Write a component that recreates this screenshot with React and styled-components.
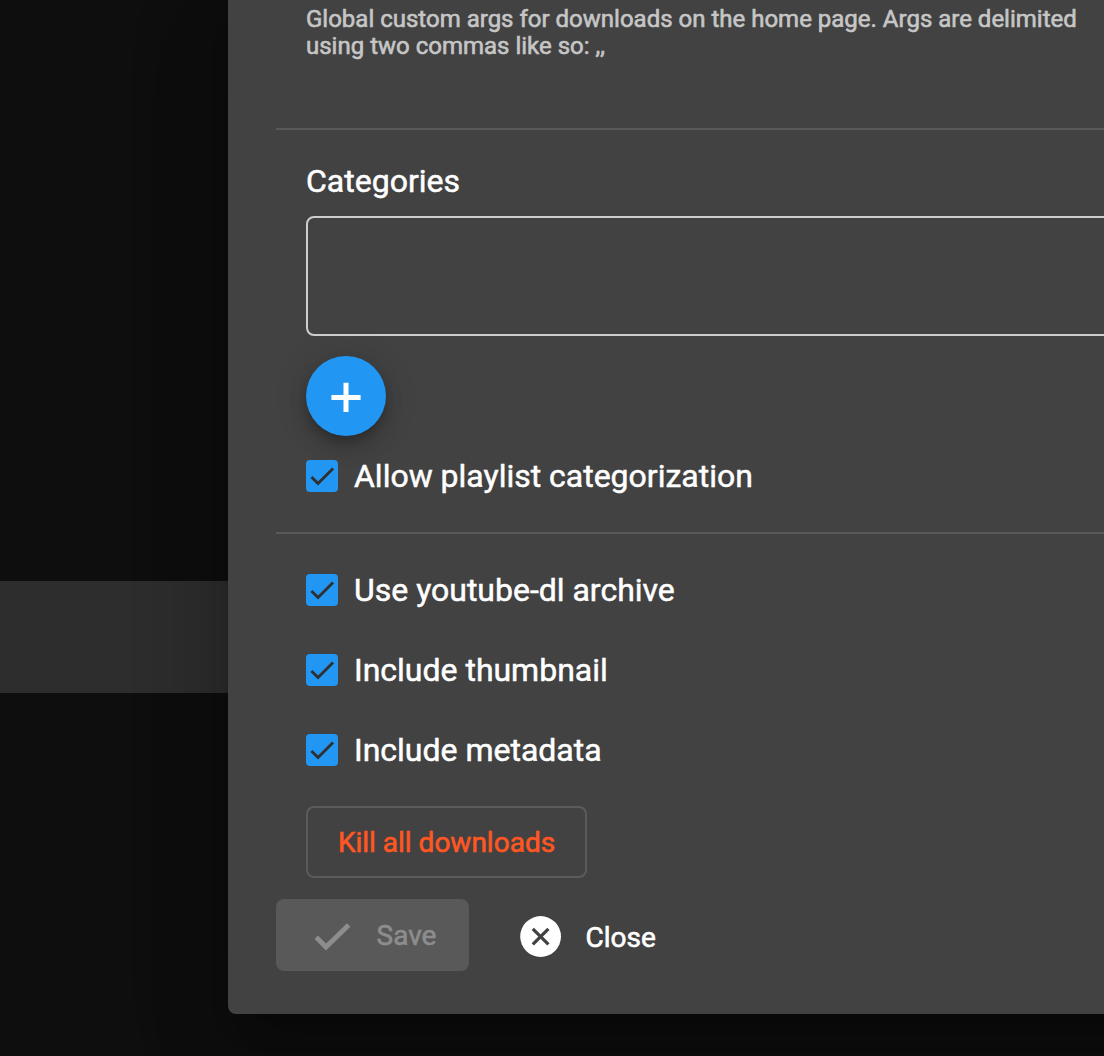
import React from "react";
import styled, { createGlobalStyle } from "styled-components";

const GlobalStyle = createGlobalStyle`
  *, *::before, *::after { box-sizing: border-box; }
  html, body { margin: 0; background: #0e0e0e; overflow: hidden; }
  body {
    font-family: Roboto, "Liberation Sans", sans-serif;
    color: #fff;
  }
`;

const Page = styled.div`
  display: grid;
  grid-template: 1056px / 1104px;
  overflow: hidden;
  background: #0e0e0e;
`;

const Backdrop = styled.div`
  grid-area: 1 / 1;
  display: flex;
  flex-direction: column;
  padding-top: 581px;
`;

const BackdropRow = styled.div`
  height: 112px;
  background: #2d2d2d;
`;

const Dialog = styled.section`
  grid-area: 1 / 1;
  width: 1400px;
  height: 1014px;
  margin-left: 228px;
  padding: 6px 48px 0;
  border-radius: 0 0 8px 8px;
  background: #424242;
  box-shadow:
    0 22px 30px -14px rgba(0, 0, 0, 0.2),
    0 48px 76px 6px rgba(0, 0, 0, 0.14),
    0 18px 92px 16px rgba(0, 0, 0, 0.12);
`;

const Section = styled.div`
  display: flex;
  flex-direction: column;
  align-items: flex-start;
  height: ${(p) => p.$height}px;
  padding: ${(p) => p.$top}px 30px 0;
`;

const Hint = styled.p`
  margin: 0;
  width: 790px;
  font-size: 24px;
  line-height: 27px;
  color: #c6c6c6;
  -webkit-text-stroke: 0.6px currentColor;
`;

const Divider = styled.hr`
  margin: 0;
  height: 2px;
  border: 0;
  background: #595959;
`;

const Heading = styled.h6`
  margin: 0 0 15px;
  font-size: 32px;
  font-weight: 400;
  line-height: 40px;
  -webkit-text-stroke: 0.5px currentColor;
`;

const CategoryList = styled.div`
  width: 1200px;
  height: 120px;
  flex: none;
  border: 2px solid #cdcdcd;
  border-radius: 8px;
`;

const Fab = styled.button`
  display: grid;
  place-items: center;
  flex: none;
  width: 80px;
  height: 80px;
  margin: 20px 0 24px;
  padding: 2px 0 0;
  border: 0;
  border-radius: 50%;
  background: #2196f3;
  color: #fff;
  box-shadow:
    0 6px 10px -2px rgba(0, 0, 0, 0.2),
    0 12px 20px 0 rgba(0, 0, 0, 0.14),
    0 2px 36px 0 rgba(0, 0, 0, 0.12);
`;

const CheckRow = styled.label`
  display: flex;
  align-items: center;
  gap: 16px;
  height: 32px;
  margin-bottom: 48px;
  font-size: 32px;
  line-height: 32px;
  white-space: nowrap;
  -webkit-text-stroke: 0.5px currentColor;
`;

const CheckLabel = styled.span`
  letter-spacing: -0.01px;
`;

const Box = styled.span`
  display: block;
  width: 32px;
  height: 32px;
  border-radius: 4px;
  background: #2196f3;
  & > svg { display: block; }
`;

const KillButton = styled.button`
  width: 281px;
  height: 72px;
  flex: none;
  margin-top: -8px;
  padding: 2px 0 0;
  border: 2px solid #5b5b5b;
  border-radius: 8px;
  background: transparent;
  font: 400 28px/66px Roboto, sans-serif;
  color: #ff5722;
  -webkit-text-stroke: 0.6px currentColor;
`;

const Actions = styled.div`
  display: flex;
  align-items: flex-start;
`;

const ActionButton = styled.button`
  display: flex;
  align-items: center;
  height: ${(p) => (p.$filled ? 72 : 76)}px;
  width: ${(p) => (p.$filled ? 193 : 200)}px;
  padding: 0 0 0 ${(p) => (p.$filled ? 38 : 51)}px;
  gap: ${(p) => (p.$filled ? 25.5 : 24.5)}px;
  border: 0;
  border-radius: 8px;
  background: ${(p) => (p.$filled ? "#595959" : "transparent")};
  color: ${(p) => (p.$filled ? "#8d8d8d" : "#fff")};
  font: 400 28px/34px Roboto, sans-serif;
  -webkit-text-stroke: 0.6px currentColor;
`;

const ActionLabel = styled.span`
  padding-top: 2px;
`;

const options = ["Use youtube-dl archive", "Include thumbnail", "Include metadata"];

function Checkbox({ children }) {
  return (
    <CheckRow>
      <Box>
        <svg width="32" height="32" viewBox="0 0 24 24">
          <path d="M4.1 12.7 9 17.6 20.3 6.3" fill="none" stroke="#303030" strokeWidth="2.13" />
        </svg>
      </Box>
      <CheckLabel>{children}</CheckLabel>
    </CheckRow>
  );
}

export default function App() {
  return (
    <>
      <GlobalStyle />
      <Page>
        <Backdrop>
          <BackdropRow />
        </Backdrop>
        <Dialog>
          <Section $height={122} $top={0}>
            <Hint>
              Global custom args for downloads on the home page. Args are delimited using two commas
              like so: ,,
            </Hint>
          </Section>
          <Divider />
          <Section $height={402} $top={31}>
            <Heading>Categories</Heading>
            <CategoryList />
            <Fab aria-label="Add category">
              <svg width="30" height="30" viewBox="0 0 30 30">
                <path d="M15 .7v29.2M.4 15.5h29.2" stroke="currentColor" strokeWidth="5" />
              </svg>
            </Fab>
            <Checkbox>Allow playlist categorization</Checkbox>
          </Section>
          <Divider />
          <Section $height={365} $top={40}>
            {options.map((label) => (
              <Checkbox key={label}>{label}</Checkbox>
            ))}
            <KillButton>Kill all downloads</KillButton>
          </Section>
          <Actions>
            <ActionButton $filled disabled>
              <svg width="37" height="32" viewBox="0 0 37 32">
                <path d="M2.2 18.3 12 28.1 34.7 6.1" fill="none" stroke="currentColor" strokeWidth="4.9" />
              </svg>
              <ActionLabel>Save</ActionLabel>
            </ActionButton>
            <ActionButton>
              <svg width="41" height="42" viewBox="0 0 41 42">
                <circle cx="20.6" cy="20.5" r="20.4" fill="currentColor" />
                <path d="m12.8 12.8 15.6 15.6m0-15.6-15.6 15.6" stroke="#424242" strokeWidth="3.2" />
              </svg>
              <ActionLabel>Close</ActionLabel>
            </ActionButton>
          </Actions>
        </Dialog>
      </Page>
    </>
  );
}
